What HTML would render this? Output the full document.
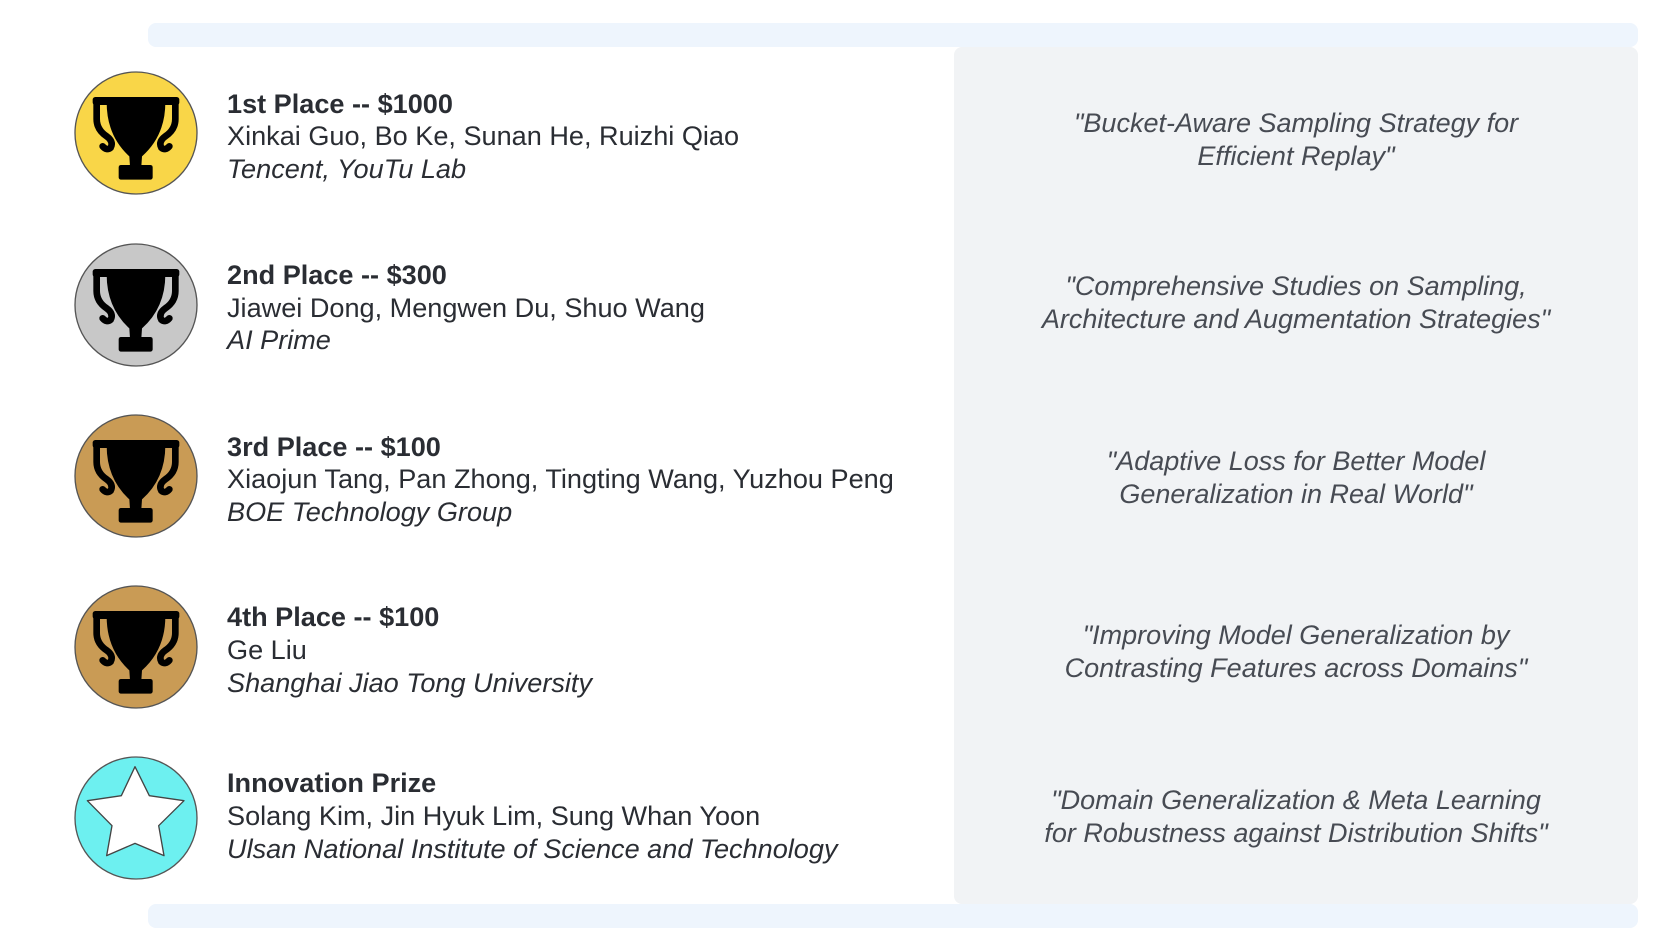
<!DOCTYPE html>
<html><head><meta charset="utf-8"><style>
*{margin:0;padding:0;box-sizing:border-box}
body{width:1672px;height:952px;background:#fff;position:relative;overflow:hidden;font-family:"Liberation Sans",sans-serif}
.bar{position:absolute;left:148px;width:1490px;height:24px;background:#eef5fd;border-radius:8px}
.panel{position:absolute;left:954px;top:47px;width:684px;height:857px;background:#f1f3f5;border-radius:8px}
.c{position:absolute;left:74px;width:124px;height:124px}
.t{position:absolute;left:227px;font-size:27.1px;line-height:33px;color:#2a2d33;white-space:nowrap}
.b{font-weight:bold}
.i{font-style:italic}
.q{position:absolute;left:954px;width:684px;text-align:center;font-style:italic;font-size:27px;line-height:33px;color:#474b53}
</style></head><body>
<div class="bar" style="top:23px"></div>
<div class="bar" style="top:904px"></div>
<div class="panel"></div>

<svg width="0" height="0" style="position:absolute"><defs>
<g id="tr">
<rect x="68" y="84" width="260" height="24" rx="8" fill="#000"/>
<path d="M110,100 H286 Q286,200 216,262 L214,292 H180 L178,262 Q110,200 110,100 Z" fill="#000"/>
<rect x="146" y="288" width="102" height="44" rx="7" fill="#000"/>
<path d="M80,100 V150 Q80,182 110,202 Q132,218 122,236 Q110,246 98,232" fill="none" stroke="#000" stroke-width="20" stroke-linecap="round"/>
<path d="M316,100 V150 Q316,182 286,202 Q264,218 274,236 Q286,246 298,232" fill="none" stroke="#000" stroke-width="20" stroke-linecap="round"/>
</g></defs></svg>

<svg class="c" style="top:71px" viewBox="0 0 372 372"><g transform="translate(-12,-6)"><circle cx="198" cy="192" r="183" fill="#f9d648" stroke="#555" stroke-width="4"/><use href="#tr"/></g></svg>
<svg class="c" style="top:243px" viewBox="0 0 372 372"><g transform="translate(-12,-6)"><circle cx="198" cy="192" r="183" fill="#c8c8c8" stroke="#555" stroke-width="4"/><use href="#tr"/></g></svg>
<svg class="c" style="top:414px" viewBox="0 0 372 372"><g transform="translate(-12,-6)"><circle cx="198" cy="192" r="183" fill="#c99b55" stroke="#555" stroke-width="4"/><use href="#tr"/></g></svg>
<svg class="c" style="top:585px" viewBox="0 0 372 372"><g transform="translate(-12,-6)"><circle cx="198" cy="192" r="183" fill="#c99b55" stroke="#555" stroke-width="4"/><use href="#tr"/></g></svg>
<svg class="c" style="top:756px" viewBox="0 0 372 372"><g transform="translate(-12,-6)"><circle cx="198" cy="192" r="183" fill="#6df0f0" stroke="#555" stroke-width="4"/>
<path d="M195,38 L238,125 L342,140 L266,215 L282,305 L195,268 L110,305 L126,215 L52,140 L154,125 Z" fill="#fff" stroke="#444" stroke-width="4" stroke-linejoin="round"/></g></svg>

<div class="t b" style="top:87px">1st Place -- $1000</div>
<div class="t" style="top:119px">Xinkai Guo, Bo Ke, Sunan He, Ruizhi Qiao</div>
<div class="t i" style="top:152px">Tencent, YouTu Lab</div>

<div class="t b" style="top:258px">2nd Place -- $300</div>
<div class="t" style="top:291px">Jiawei Dong, Mengwen Du, Shuo Wang</div>
<div class="t i" style="top:323px">AI Prime</div>

<div class="t b" style="top:430px">3rd Place -- $100</div>
<div class="t" style="top:462px">Xiaojun Tang, Pan Zhong, Tingting Wang, Yuzhou Peng</div>
<div class="t i" style="top:495px">BOE Technology Group</div>

<div class="t b" style="top:600px">4th Place -- $100</div>
<div class="t" style="top:633px">Ge Liu</div>
<div class="t i" style="top:666px">Shanghai Jiao Tong University</div>

<div class="t b" style="top:766px">Innovation Prize</div>
<div class="t" style="top:799px">Solang Kim, Jin Hyuk Lim, Sung Whan Yoon</div>
<div class="t i" style="top:832px">Ulsan National Institute of Science and Technology</div>

<div class="q" style="top:107px">"Bucket-Aware Sampling Strategy for<br>Efficient Replay"</div>
<div class="q" style="top:270px">"Comprehensive Studies on Sampling,<br>Architecture and Augmentation Strategies"</div>
<div class="q" style="top:445px">"Adaptive Loss for Better Model<br>Generalization in Real World"</div>
<div class="q" style="top:619px">"Improving Model Generalization by<br>Contrasting Features across Domains"</div>
<div class="q" style="top:784px">"Domain Generalization &amp; Meta Learning<br>for Robustness against Distribution Shifts"</div>
</body></html>
